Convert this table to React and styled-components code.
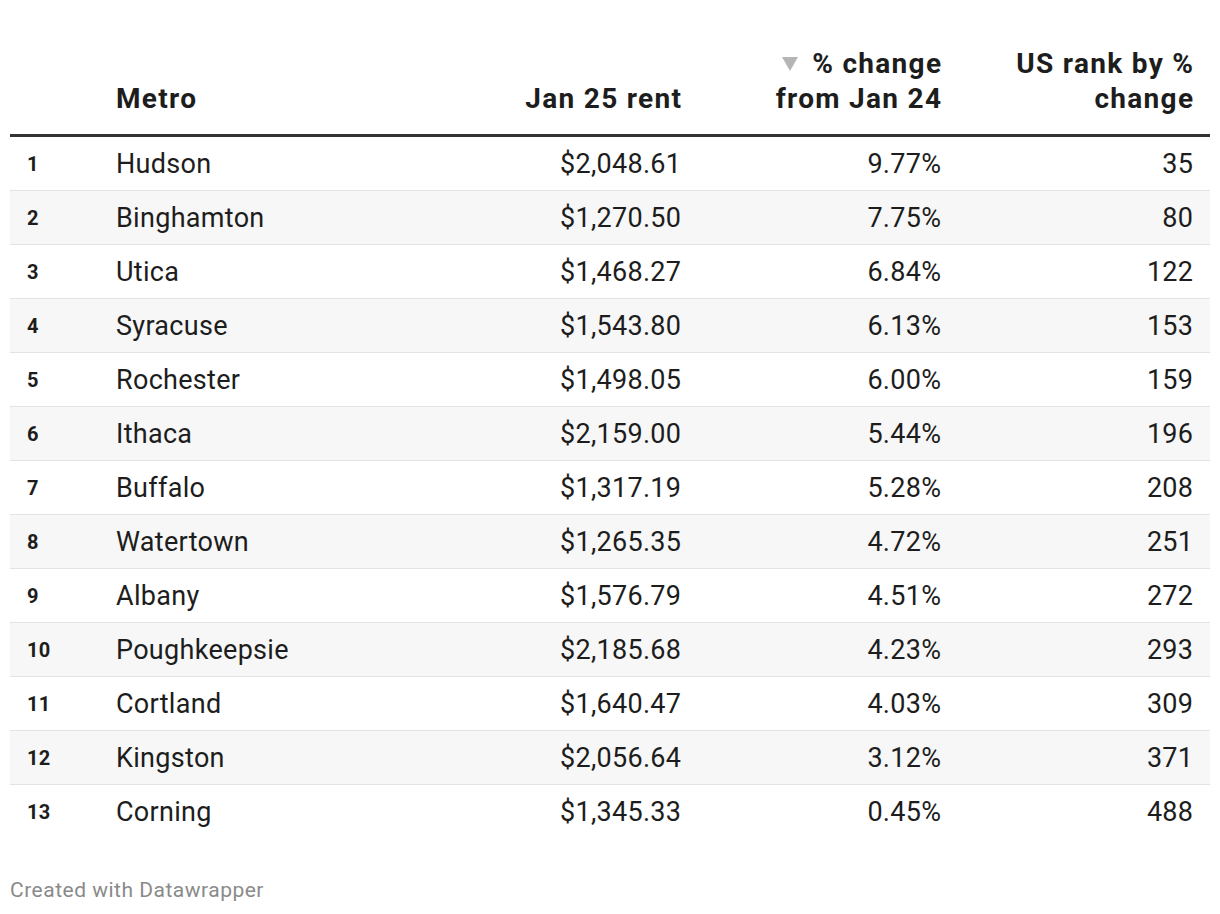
import styled, { createGlobalStyle } from 'styled-components';

const GlobalStyle = createGlobalStyle`
  body {
    margin: 0;
    background: #ffffff;
    font-family: Roboto, "Liberation Sans", sans-serif;
    color: #1d1d1d;
  }
`;

const Wrapper = styled.div`
  width: 1200px;
  padding: 46px 10px 0;
`;

const Table = styled.table`
  width: 1200px;
  border-collapse: collapse;
  table-layout: fixed;
`;

// letter-spacing leaves a trailing gap after the last glyph, so the right
// padding is trimmed by the same amount to keep right edges in line
const HeadCell = styled.th`
  font-size: 28px;
  font-weight: 700;
  letter-spacing: 1.3px;
  line-height: 35px;
  text-align: ${p => (p.$right ? 'right' : 'left')};
  vertical-align: bottom;
  padding: 0 ${p => (p.$pr || 10) - 1.3}px 18px ${p => p.$pl || 10}px;
  border-bottom: 3px solid #333333;
  color: #1d1d1d;
  white-space: nowrap;
`;

const SortArrow = styled.span`
  display: inline-block;
  width: 0;
  height: 0;
  border-left: 8px solid transparent;
  border-right: 8px solid transparent;
  border-top: 14px solid #b5b5b5;
  margin-right: 14px;
  vertical-align: 2px;
`;

const Row = styled.tr`
  background: ${p => (p.$striped ? '#f7f7f7' : '#ffffff')};
  border-bottom: ${p => (p.$last ? 'none' : '1px solid #e3e3e3')};
`;

const Cell = styled.td`
  height: 53px;
  padding: 0 ${p => (p.$pr || 10) - 0.3}px 0 ${p => p.$pl || 10}px;
  font-size: 27px;
  letter-spacing: 0.3px;
  text-align: ${p => (p.$right ? 'right' : 'left')};
  vertical-align: middle;
  color: #1d1d1d;
  white-space: nowrap;
`;

const RankCell = styled(Cell)`
  font-size: 20px;
  font-weight: 700;
`;

const Footer = styled.div`
  margin-top: 40px;
  font-size: 21px;
  letter-spacing: 0.5px;
  color: #8a8a8a;
`;

const rows = [
  ['Hudson', '$2,048.61', '9.77%', 35],
  ['Binghamton', '$1,270.50', '7.75%', 80],
  ['Utica', '$1,468.27', '6.84%', 122],
  ['Syracuse', '$1,543.80', '6.13%', 153],
  ['Rochester', '$1,498.05', '6.00%', 159],
  ['Ithaca', '$2,159.00', '5.44%', 196],
  ['Buffalo', '$1,317.19', '5.28%', 208],
  ['Watertown', '$1,265.35', '4.72%', 251],
  ['Albany', '$1,576.79', '4.51%', 272],
  ['Poughkeepsie', '$2,185.68', '4.23%', 293],
  ['Cortland', '$1,640.47', '4.03%', 309],
  ['Kingston', '$2,056.64', '3.12%', 371],
  ['Corning', '$1,345.33', '0.45%', 488],
];

export default function App() {
  return (
    <Wrapper>
      <GlobalStyle />
      <Table>
        <colgroup>
          <col style={{ width: 96 }} />
          <col style={{ width: 314 }} />
          <col style={{ width: 271 }} />
          <col style={{ width: 260 }} />
          <col style={{ width: 259 }} />
        </colgroup>
        <thead>
          <tr>
            <HeadCell $pl={17} />
            <HeadCell>Metro</HeadCell>
            <HeadCell $right>Jan 25 rent</HeadCell>
            <HeadCell $right>
              <SortArrow />% change
              <br />
              from Jan 24
            </HeadCell>
            <HeadCell $right $pr={17}>
              US rank by %
              <br />
              change
            </HeadCell>
          </tr>
        </thead>
        <tbody>
          {rows.map(([metro, rent, pct, rank], i) => (
            <Row key={metro} $striped={i % 2 === 1} $last={i === rows.length - 1}>
              <RankCell $pl={17}>{i + 1}</RankCell>
              <Cell>{metro}</Cell>
              <Cell $right>{rent}</Cell>
              <Cell $right>{pct}</Cell>
              <Cell $right $pr={17}>{rank}</Cell>
            </Row>
          ))}
        </tbody>
      </Table>
      <Footer>Created with Datawrapper</Footer>
    </Wrapper>
  );
}
